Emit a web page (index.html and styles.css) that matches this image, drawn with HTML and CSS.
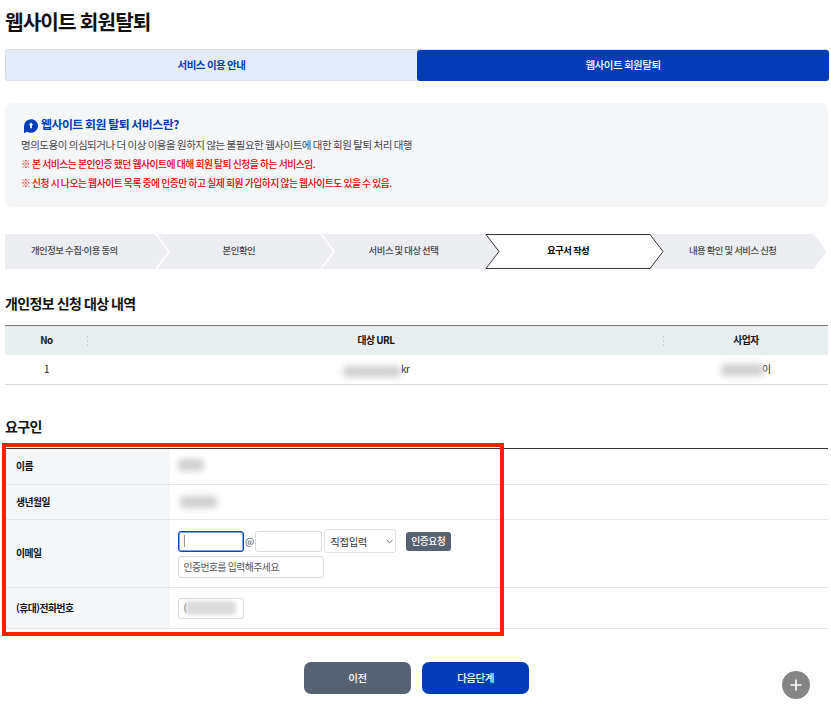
FILE: index.html
```html
<!DOCTYPE html>
<html lang="ko">
<head>
<meta charset="utf-8">
<title>웹사이트 회원탈퇴</title>
<link rel="stylesheet" href="styles.css">
</head>
<body>
<main class="page">
  <h1 class="page-title">웹사이트 회원탈퇴</h1>
  <nav class="tabs">
    <a class="tab">서비스 이용 안내</a>
    <a class="tab tab-active">웹사이트 회원탈퇴</a>
  </nav>

  <section class="info">
    <h2 class="info-title">
      <svg class="info-icon" viewBox="0 0 14 15" width="14" height="15"><path d="M0 14.3V7a7 6.8 0 1 1 3.2 5.7Q1.3 13.2 0 14.3Z" fill="#003cb5"/><path d="M7 3.6 9 5.7 7.9 6.5V9.3H6.1V6.5L5 5.7Z" fill="#fff"/></svg>
      <span>웹사이트 회원 탈퇴 서비스란?</span>
    </h2>
    <p class="info-text">명의도용이 의심되거나 더 이상 이용을 원하지 않는 불필요한 웹사이트에 대한 회원 탈퇴 처리 대행</p>
    <p class="info-note">※ 본 서비스는 본인인증 했던 웹사이트에 대해 회원 탈퇴 신청을 하는 서비스임.</p>
    <p class="info-note">※ 신청 시 나오는 웹사이트 목록 중에 인증만 하고 실제 회원 가입하지 않는 웹사이트도 있을 수 있음.</p>
  </section>

  <div class="steps">
    <svg class="steps-shape" viewBox="0 0 823 35" width="823" height="35">
      <path d="M0 0H809L821 17.5 809 35H0Z" fill="#ecedf1"/>
      <path d="M151 0 164 17.5 151 35M316 0 329 17.5 316 35" fill="none" stroke="#fff" stroke-width="1.6"/>
      <path d="M481 .5H645L658 17.5 645 34.5H481L494 17.5Z" fill="#fff" stroke="#333" stroke-width="1"/>
    </svg>
    <ol class="step-list">
      <li>개인정보 수집·이용 동의</li>
      <li>본인확인</li>
      <li>서비스 및 대상 선택</li>
      <li class="current">요구서 작성</li>
      <li>내용 확인 및 서비스 신청</li>
    </ol>
  </div>

  <h2 class="section-title">개인정보 신청 대상 내역</h2>
  <div class="target">
    <div class="target-row target-head">
      <span>No</span><span>대상 URL</span><span>사업자</span>
    </div>
    <div class="target-row">
      <span>1</span>
      <span class="masked-cell"><i class="mask mask-url"></i>kr</span>
      <span class="masked-cell owner"><i class="mask mask-owner"></i>이</span>
    </div>
  </div>

  <h2 class="section-title applicant-title">요구인</h2>
  <div class="form">
    <div class="form-row row-name"><div class="label">이름</div><div class="field"><i class="mask mask-name"></i></div></div>
    <div class="form-row row-birth"><div class="label">생년월일</div><div class="field"><i class="mask mask-birth"></i></div></div>
    <div class="form-row row-email">
      <div class="label">이메일</div>
      <div class="field field-email">
        <div class="email-line">
          <div class="input focused"><i class="caret"></i></div>
          <span class="at">@</span>
          <div class="input"></div>
          <div class="select"><span>직접입력</span><svg viewBox="0 0 8 5" width="7" height="5"><path d="M.7.8 4 4 7.3.8" fill="none" stroke="#555" stroke-width="1"/></svg></div>
          <button class="verify">인증요청</button>
        </div>
        <div class="input code">인증번호를 입력해주세요</div>
      </div>
    </div>
    <div class="form-row row-phone"><div class="label">(휴대)전화번호</div><div class="field"><div class="input phone"><span>(</span><i class="mask mask-phone"></i></div></div></div>
    <div class="highlight"></div>
  </div>

  <div class="actions">
    <button class="action prev">이전</button>
    <button class="action next">다음단계</button>
  </div>
</main>
<button class="fab"><svg viewBox="0 0 12 12" width="12" height="12"><path d="M6 .5V11.5M.5 6H11.5" stroke="#fff" stroke-width="1.6"/></svg></button>
</body>
</html>
```
FILE: styles.css
```css
* { box-sizing: border-box; }
body {
  margin: 0;
  height: 706px;
  overflow: hidden;
  background: #fff;
  color: #111;
  font-family: "Noto Sans CJK KR", sans-serif;
  font-size: 9.8px;
  letter-spacing: -0.05em;
  word-spacing: -0.06em;
}
h1, h2, p, ol { margin: 0; padding: 0; }
button { font: inherit; letter-spacing: inherit; border: 0; padding: 0; color: #fff; }
.page { margin-left: 5px; width: 823px; }
.page-title { padding-top: 7px; height: 49px; font-size: 20.2px; line-height: 30px; font-weight: 700; letter-spacing: -0.045em; }

.tabs { display: flex; width: 824px; height: 32px; background: #e3ebf6; border: 1px solid #d9e0ea; border-right: 0; border-radius: 3px; }
.tab { flex: 1; font-size: 10.5px; font-weight: 700; line-height: 30px; text-align: center; color: #003cb5; }
.tab-active { flex: 0 0 412px; height: 31px; background: #003cb5; color: #fff; border-radius: 3px; font-weight: 500; }

.info { margin-top: 22px; height: 104px; padding: 11px 16px; background: #f5f6f8; border-radius: 7px; }
.info-title { display: flex; align-items: center; height: 21px; padding-left: 3px; font-size: 11.9px; line-height: 21px; font-weight: 700; color: #003cb5; }
.info-title span { margin-top: -2px; }
.info-icon { margin: 3px 3px 0 0; }
.info-text { font-size: 10.5px; line-height: 20px; color: #444; }
.info-note { font-size: 9.8px; line-height: 18.5px; color: #e00000; font-weight: 500; }

.steps { position: relative; margin-top: 27px; height: 35px; }
.steps-shape { position: absolute; left: 0; top: 0; }
.step-list { position: relative; display: flex; width: 823px; margin-left: -13px; list-style: none; font-size: 9.4px; line-height: 33px; text-align: center; color: #444; font-weight: 500; }
.step-list li { flex: 1; }
.step-list .current { color: #000; font-weight: 700; }

.section-title { margin-top: 23px; height: 33px; font-size: 14px; line-height: 22px; font-weight: 700; letter-spacing: -0.045em; }
.target { border-top: 1px solid #777; border-bottom: 1px solid #d8d8d8; }
.target-row { display: grid; grid-template-columns: 83px 576px 164px; height: 29px; line-height: 29px; text-align: center; }
.target-head { background: #e8edf0; font-weight: 700; }
.target-head span { background: repeating-linear-gradient(#c5cacc 0 2px, transparent 2px 4px) right 10px / 1px 10px no-repeat; }
.target-head span:last-child { background: none; }
.mask { display: block; flex: none; background: #cfcfcf; filter: blur(3px); border-radius: 4px; }
.masked-cell { display: flex; align-items: center; padding-left: 255px; }
.mask-url { width: 58px; height: 11px; margin-top: 4px; }
.owner { padding-left: 57px; }
.mask-owner { width: 43px; height: 12px; margin-right: -2px; }

.applicant-title { margin-top: 30px; }
.form { position: relative; border-top: 1px solid #333; }
.form-row { display: flex; border-bottom: 1px solid #e5e6e8; }
.row-name { height: 36px; }
.row-birth { height: 35px; }
.row-email { height: 68px; }
.row-phone { height: 41px; }
.label { display: flex; align-items: center; width: 165px; padding: 0 0 1px 11px; background: #f5f6f8; font-weight: 700; }
.field { display: flex; align-items: center; padding-left: 7.5px; }
.field-email { flex-direction: column; align-items: flex-start; justify-content: center; gap: 3px; }
.email-line { display: flex; align-items: center; height: 24px; }
.input { display: flex; align-items: center; width: 66.5px; height: 21px; padding: 0 0 1px 5px; border: 1px solid #d9d9d9; border-radius: 3px; background: #fff; }
.focused { border: 1px solid #0648bd; box-shadow: inset 0 0 0 .5px #0648bd; }
.caret { width: 1px; height: 12px; background: #999; }
.at { width: 11px; text-align: center; color: #444; }
.select { display: flex; align-items: center; justify-content: space-between; width: 72px; height: 24px; margin-left: 2px; padding: 0 2px 0 6px; border: 1px solid #e2e2e2; border-radius: 3px; font-size: 10px; letter-spacing: 0; color: #333; }
.verify { width: 45.5px; height: 19px; margin-left: 10px; background: #566174; border-radius: 3px; font-weight: 500; line-height: 18px; }
.code { width: 146.5px; height: 22px; font-size: 9.8px; color: #555; }
.mask-phone { width: 51px; height: 14px; margin-left: -1px; background: #dcdcdc; filter: blur(2px); }
.mask-name { width: 26px; height: 12px; margin-top: -3px; }
.mask-birth { width: 37px; height: 12px; margin-left: 2px; }
.highlight { position: absolute; left: -3px; top: -6px; width: 502px; height: 193px; border: 4px solid #ff1e00; }

.actions { display: flex; justify-content: center; gap: 11px; margin-top: 33px; }
.action { width: 107px; height: 32px; border-radius: 7px; font-size: 10.5px; font-weight: 500; line-height: 30px; }
.prev { background: #566174; }
.next { background: #003cb5; }
.fab { position: fixed; right: 21px; bottom: 7px; display: flex; align-items: center; justify-content: center; width: 28px; height: 28px; border-radius: 50%; background: #858585; }
```
